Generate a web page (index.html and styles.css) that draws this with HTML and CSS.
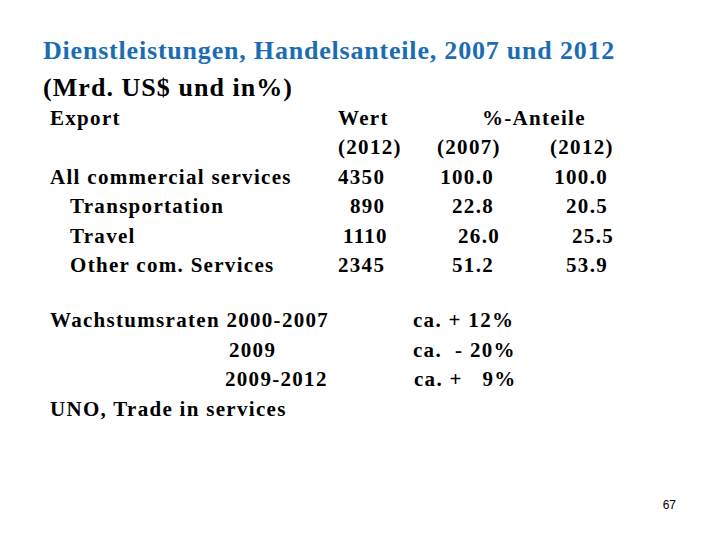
FILE: index.html
```html
<!DOCTYPE html>
<html lang="de">
<head>
<meta charset="utf-8">
<title>Dienstleistungen, Handelsanteile</title>
<link rel="stylesheet" href="styles.css">
</head>
<body>
<div class="slide">
  <h1 class="title"><span class="blue">Dienstleistungen, Handelsanteile, 2007 und 2012</span><br><span class="sub">(Mrd. US$ und in%)</span></h1>

  <div class="table">
    <div class="c lab">Export</div>
    <div class="c w">Wert</div>
    <div class="c span2">%-Anteile</div>

    <div class="c lab"></div>
    <div class="c w">(2012)</div>
    <div class="c p1">(2007)</div>
    <div class="c p2">(2012)</div>

    <div class="c lab">All commercial services</div>
    <div class="c w">4350</div>
    <div class="c p1 n">100.0</div>
    <div class="c p2 n">100.0</div>

    <div class="c lab ind">Transportation</div>
    <div class="c w i1">890</div>
    <div class="c p1 n">22.8</div>
    <div class="c p2 n">20.5</div>

    <div class="c lab ind">Travel</div>
    <div class="c w i2">1110</div>
    <div class="c p1 n sh">26.0</div>
    <div class="c p2 n sh">25.5</div>

    <div class="c lab ind">Other com. Services</div>
    <div class="c w">2345</div>
    <div class="c p1 n">51.2</div>
    <div class="c p2 n">53.9</div>
  </div>

  <div class="growth">
    <div class="g lab">Wachstumsraten 2000-2007</div>
    <div class="g val">ca. + 12%</div>
    <div class="g lab y1">2009</div>
    <div class="g val">ca. &nbsp;- 20%</div>
    <div class="g lab y2">2009-2012</div>
    <div class="g val v3">ca. + &nbsp; 9%</div>
    <div class="g lab">UNO, Trade in services</div>
    <div class="g val"></div>
  </div>

  <div class="footer"><span class="page">67</span></div>
</div>
</body>
</html>
```
FILE: styles.css
```css
html, body {
  margin: 0;
  padding: 0;
  background: #ffffff;
}

.slide {
  width: 720px;
  height: 540px;
  box-sizing: border-box;
  padding-top: 32px;
  font-family: "Liberation Serif", "Times New Roman", serif;
  color: #000000;
  overflow: hidden;
}

.title {
  margin: 0 0 0 43px;
  font-size: 26px;
  line-height: 37px;
  font-weight: bold;
  color: #000000;
  letter-spacing: 0.8px;
}

.blue {
  color: #1b6db3;
}

.sub {
  letter-spacing: 1.05px;
}

.table {
  display: grid;
  grid-template-columns: 288px 99px 113px 120px;
  margin: -2px 0 0 50px;
  font-size: 21px;
  font-weight: bold;
  line-height: 29.4px;
  letter-spacing: 1.3px;
}

.c {
  white-space: nowrap;
}

.ind {
  padding-left: 20px;
}

.span2 {
  grid-column: span 2;
  padding-left: 45px;
}

.w.i1 {
  padding-left: 12px;
}

.w.i2 {
  padding-left: 5px;
}

.p1.n {
  text-align: right;
  width: 57px;
}

.p2.n {
  text-align: right;
  width: 58px;
}

.p1.sh {
  width: 63px;
}

.p2.sh {
  width: 64px;
}

.growth {
  display: grid;
  grid-template-columns: 363px 150px;
  margin: 26px 0 0 50px;
  font-size: 21px;
  font-weight: bold;
  line-height: 29.4px;
  letter-spacing: 1.3px;
}

.g {
  white-space: nowrap;
}

.y1 {
  padding-left: 179px;
}

.y2 {
  padding-left: 175px;
}

.v3 {
  padding-left: 1px;
}

.footer {
  display: flex;
  justify-content: flex-end;
  margin-top: 74px;
  padding-right: 44px;
}

.page {
  font-family: "Liberation Sans", Arial, sans-serif;
  font-size: 12px;
  line-height: 14px;
  color: #000000;
}
```
